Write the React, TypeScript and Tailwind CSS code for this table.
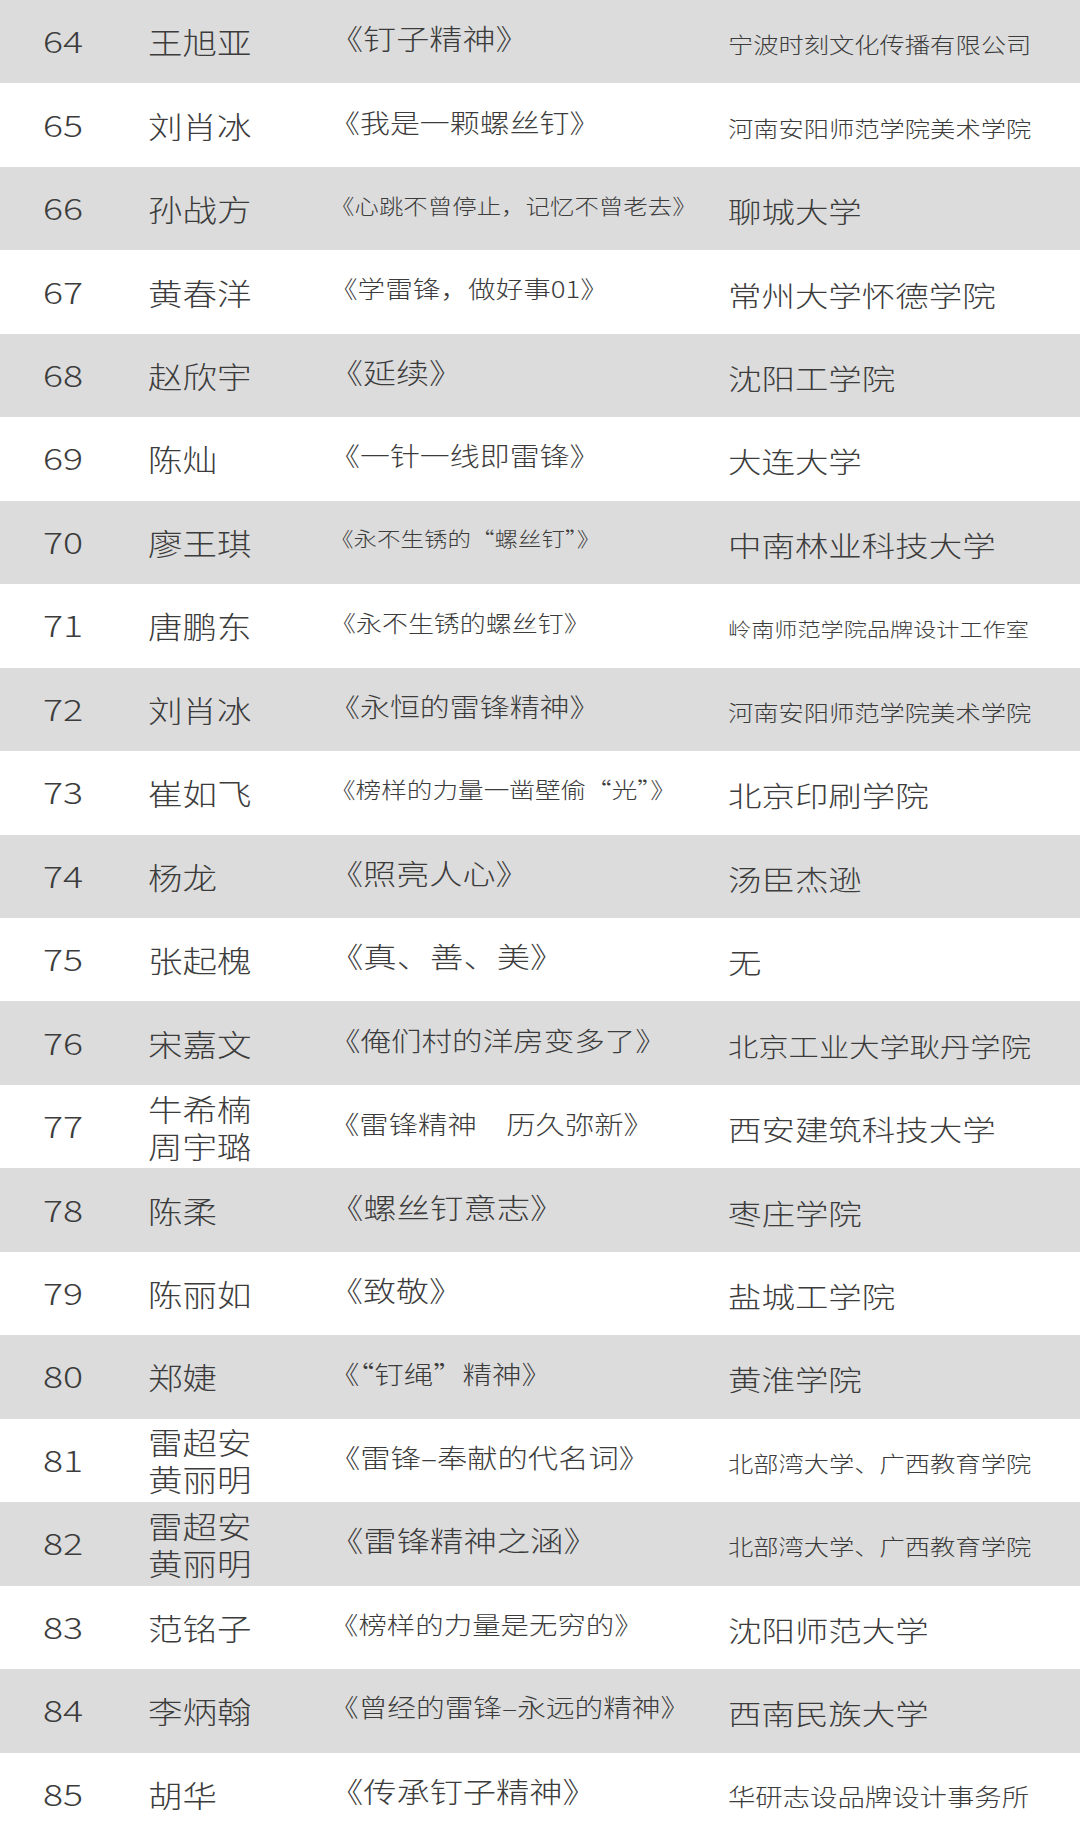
type Row = {
  no: number;
  name: string[];
  title: string;
  titleSize: string;
  org: string;
  orgSize: string;
};

const rows: Row[] = [
  { no: 64, name: ["王旭亚"], title: "《钉子精神》", titleSize: "text-[28.3px]", org: "宁波时刻文化传播有限公司", orgSize: "text-[21.6px]" },
  { no: 65, name: ["刘肖冰"], title: "《我是一颗螺丝钉》", titleSize: "text-[25.6px]", org: "河南安阳师范学院美术学院", orgSize: "text-[21.6px]" },
  { no: 66, name: ["孙战方"], title: "《心跳不曾停止，记忆不曾老去》", titleSize: "text-[20.9px]", org: "聊城大学", orgSize: "text-[28.6px]" },
  { no: 67, name: ["黄春洋"], title: "《学雷锋，做好事01》", titleSize: "text-[23.6px]", org: "常州大学怀德学院", orgSize: "text-[28.6px]" },
  { no: 68, name: ["赵欣宇"], title: "《延续》", titleSize: "text-[28.2px]", org: "沈阳工学院", orgSize: "text-[28.6px]" },
  { no: 69, name: ["陈灿"], title: "《一针一线即雷锋》", titleSize: "text-[25.6px]", org: "大连大学", orgSize: "text-[28.6px]" },
  { no: 70, name: ["廖王琪"], title: "《永不生锈的“螺丝钉”》", titleSize: "text-[20.1px]", org: "中南林业科技大学", orgSize: "text-[28.6px]" },
  { no: 71, name: ["唐鹏东"], title: "《永不生锈的螺丝钉》", titleSize: "text-[22.2px]", org: "岭南师范学院品牌设计工作室", orgSize: "text-[19.8px]" },
  { no: 72, name: ["刘肖冰"], title: "《永恒的雷锋精神》", titleSize: "text-[25.6px]", org: "河南安阳师范学院美术学院", orgSize: "text-[21.6px]" },
  { no: 73, name: ["崔如飞"], title: "《榜样的力量一凿壁偷“光”》", titleSize: "text-[21.9px]", org: "北京印刷学院", orgSize: "text-[28.6px]" },
  { no: 74, name: ["杨龙"], title: "《照亮人心》", titleSize: "text-[28.3px]", org: "汤臣杰逊", orgSize: "text-[28.6px]" },
  { no: 75, name: ["张起槐"], title: "《真、善、美》", titleSize: "text-[28.5px]", org: "无", orgSize: "text-[28.6px]" },
  { no: 76, name: ["宋嘉文"], title: "《俺们村的洋房变多了》", titleSize: "text-[26.1px]", org: "北京工业大学耿丹学院", orgSize: "text-[25.9px]" },
  { no: 77, name: ["牛希楠", "周宇璐"], title: "《雷锋精神　历久弥新》", titleSize: "text-[25.1px]", org: "西安建筑科技大学", orgSize: "text-[28.6px]" },
  { no: 78, name: ["陈柔"], title: "《螺丝钉意志》", titleSize: "text-[28.5px]", org: "枣庄学院", orgSize: "text-[28.6px]" },
  { no: 79, name: ["陈丽如"], title: "《致敬》", titleSize: "text-[28.2px]", org: "盐城工学院", orgSize: "text-[28.6px]" },
  { no: 80, name: ["郑婕"], title: "《“钉绳”精神》", titleSize: "text-[25.2px]", org: "黄淮学院", orgSize: "text-[28.6px]" },
  { no: 81, name: ["雷超安", "黄丽明"], title: "《雷锋–奉献的代名词》", titleSize: "text-[25.9px]", org: "北部湾大学、广西教育学院", orgSize: "text-[21.6px]" },
  { no: 82, name: ["雷超安", "黄丽明"], title: "《雷锋精神之涵》", titleSize: "text-[28.5px]", org: "北部湾大学、广西教育学院", orgSize: "text-[21.6px]" },
  { no: 83, name: ["范铭子"], title: "《榜样的力量是无穷的》", titleSize: "text-[24.3px]", org: "沈阳师范大学", orgSize: "text-[28.6px]" },
  { no: 84, name: ["李炳翰"], title: "《曾经的雷锋–永远的精神》", titleSize: "text-[24.5px]", org: "西南民族大学", orgSize: "text-[28.6px]" },
  { no: 85, name: ["胡华"], title: "《传承钉子精神》", titleSize: "text-[28.4px]", org: "华研志设品牌设计事务所", orgSize: "text-[23.4px]" },
];

const stretch = "inline-block origin-left scale-x-[1.17] whitespace-nowrap";

export default function App() {
  return (
    <div className="flex h-[1836px] w-[1080px] flex-col overflow-hidden bg-white font-['Noto_Sans_CJK_SC',sans-serif] font-light text-[#3c3c3c]">
      {rows.map((r, i) => (
        <div
          key={r.no}
          className={`grid flex-1 grid-cols-[148px_182px_398px_1fr] items-center ${i % 2 === 0 ? "bg-[#dcdcdc]" : "bg-white"}`}
        >
          <div className="pl-[43px]">
            <span className="inline-block origin-left scale-x-[1.25] whitespace-nowrap text-[30px] leading-none">{r.no}</span>
          </div>
          <div>
            <span className={`${stretch} text-[29.5px] leading-[37px]`}>
              {r.name.map((n) => (
                <div key={n}>{n}</div>
              ))}
            </span>
          </div>
          <div className="pb-1">
            <span className={`${stretch} ${r.titleSize} leading-none`}>{r.title}</span>
          </div>
          <div className="pt-2">
            <span className={`${stretch} ${r.orgSize} leading-none`}>{r.org}</span>
          </div>
        </div>
      ))}
    </div>
  );
}
